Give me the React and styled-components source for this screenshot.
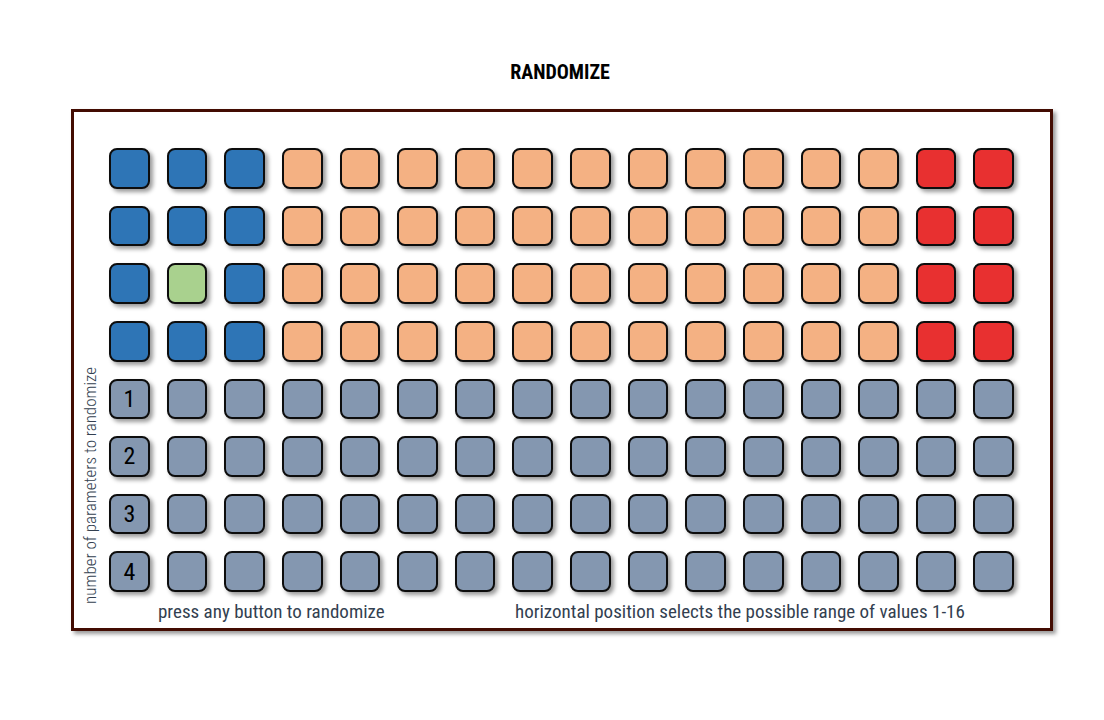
import React, { useState } from "react";
import styled, { createGlobalStyle } from "styled-components";

const GlobalStyle = createGlobalStyle`
  *, *::before, *::after { box-sizing: border-box; }
  body {
    margin: 0;
    background: #ffffff;
    color: #333f50;
    font-family: "Agency FB", "Roboto Condensed", "Liberation Sans", sans-serif;
  }
`;

const tones = {
  blue: "#2e75b6",
  peach: "#f4b183",
  red: "#e83030",
  green: "#a9d18e",
  slate: "#8497b0",
};

const Page = styled.main`
  padding: 56px 51px 48px 71px;
`;

const Title = styled.h1`
  margin: 0 0 21px;
  padding-right: 4px;
  color: #000000;
  font-size: 20px;
  line-height: 32px;
  font-weight: 700;
  text-align: center;
`;

const Panel = styled.section`
  display: grid;
  grid-template-columns: 35px 1fr;
  padding: 36px 36px 0 0;
  border: 3px solid #430c02;
  box-shadow: 3px 3px 4px rgba(0, 0, 0, 0.4);
`;

const SideLabel = styled.p`
  justify-self: start;
  align-self: end;
  margin: 0 0 24px 4px;
  writing-mode: vertical-rl;
  transform: rotate(180deg);
  font-size: 17px;
  line-height: 24px;
  font-weight: 300;
  white-space: nowrap;
`;

const PadGrid = styled.div`
  display: grid;
  grid-template-columns: repeat(16, 1fr);
  gap: 17px;
`;

const Pad = styled.button`
  display: flex;
  align-items: center;
  justify-content: center;
  width: 100%;
  min-width: 0;
  aspect-ratio: 1;
  padding: 0;
  border: 2px solid #0d0d0d;
  border-radius: 8px;
  background: ${({ $tone }) => tones[$tone]};
  box-shadow: 3px 3px 4px rgba(0, 0, 0, 0.4);
  color: #000000;
  font-family: inherit;
  font-size: 24px;
  line-height: 24px;
  font-weight: 400;
  cursor: pointer;
`;

const Board = styled.div`
  min-width: 0;
`;

const Captions = styled.div`
  display: grid;
  grid-template-columns: 357fr 499fr;
  padding: 8px 0 4px 49px;
`;

const Caption = styled.p`
  margin: 0;
  font-size: 19px;
  line-height: 24px;
  white-space: nowrap;
`;

const ROWS = 8;
const COLUMNS = 16;

function toneOf(row, column, selected) {
  if (row >= 4) return "slate";
  if (row === selected.row && column === selected.column) return "green";
  if (column < 3) return "blue";
  return column < 14 ? "peach" : "red";
}

export default function App() {
  const [selected, setSelected] = useState({ row: 2, column: 1 });
  const pads = Array.from({ length: ROWS * COLUMNS }, (_, index) => ({
    row: Math.floor(index / COLUMNS),
    column: index % COLUMNS,
  }));

  return (
    <>
      <GlobalStyle />
      <Page>
        <Title>RANDOMIZE</Title>
        <Panel>
          <SideLabel>number of parameters to randomize</SideLabel>
          <Board>
            <PadGrid>
              {pads.map(({ row, column }) => (
                <Pad
                  key={`${row}-${column}`}
                  type="button"
                  $tone={toneOf(row, column, selected)}
                  aria-label={`Row ${row + 1}, column ${column + 1}`}
                  onClick={() => row < 4 && setSelected({ row, column })}
                >
                  {row >= 4 && column === 0 ? row - 3 : null}
                </Pad>
              ))}
            </PadGrid>
            <Captions>
              <Caption>press any button to randomize</Caption>
              <Caption>horizontal position selects the possible range of values 1-16</Caption>
            </Captions>
          </Board>
        </Panel>
      </Page>
    </>
  );
}
